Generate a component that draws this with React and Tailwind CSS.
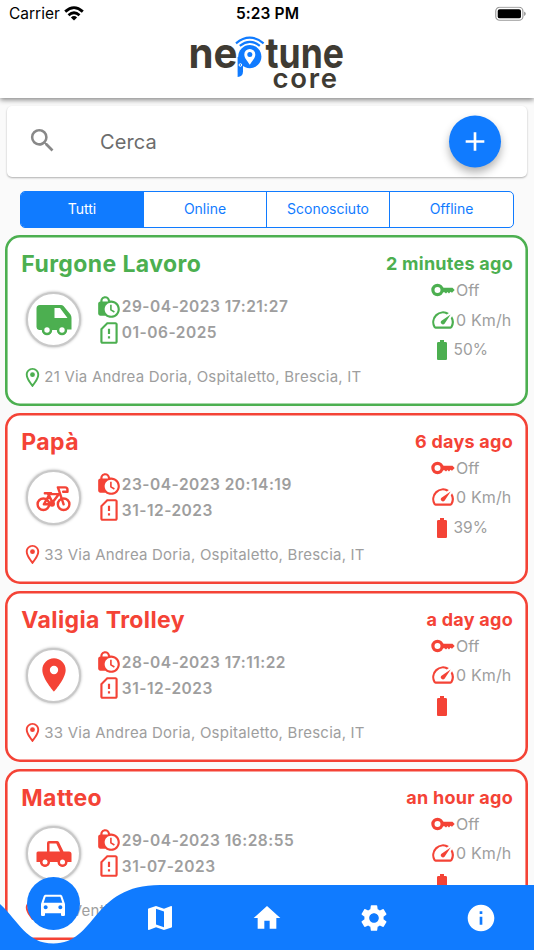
import {
  MdAdd,
  MdBatteryFull,
  MdDirectionsCar,
  MdHome,
  MdInfo,
  MdLocationOn,
  MdLockClock,
  MdMap,
  MdOutlineLocationOn,
  MdOutlineSimCardAlert,
  MdSearch,
  MdSettings,
  MdSpeed,
} from "react-icons/md";

const tabs = ["Tutti", "Online", "Sconosciuto", "Offline"];

const devices = [
  {
    name: "Furgone Lavoro",
    ago: "2 minutes ago",
    icon: VanIcon,
    online: true,
    lastSeen: "29-04-2023 17:21:27",
    expires: "01-06-2025",
    address: "21 Via Andrea Doria, Ospitaletto, Brescia, IT",
    battery: "50%",
  },
  {
    name: "Papà",
    ago: "6 days ago",
    icon: BikeIcon,
    online: false,
    lastSeen: "23-04-2023 20:14:19",
    expires: "31-12-2023",
    address: "33 Via Andrea Doria, Ospitaletto, Brescia, IT",
    battery: "39%",
  },
  {
    name: "Valigia Trolley",
    ago: "a day ago",
    icon: PinIcon,
    online: false,
    lastSeen: "28-04-2023 17:11:22",
    expires: "31-12-2023",
    address: "33 Via Andrea Doria, Ospitaletto, Brescia, IT",
    battery: "",
  },
  {
    name: "Matteo",
    ago: "an hour ago",
    icon: PickupIcon,
    online: false,
    lastSeen: "29-04-2023 16:28:55",
    expires: "31-07-2023",
    address: "Via Venti",
    battery: "",
  },
];

function VanIcon() {
  return (
    <svg width="36" height="32" viewBox="0 0 36 32" fill="currentColor">
      <path
        fillRule="evenodd"
        d="M4 1H25Q26.500 1 27.500 2L34.500 10.500Q35.500 12 35.500 14V25.500H31A5 5 0 0 1 21 26H16A5 5 0 0 1 6 26H3Q.5 25.500.5 23V4.500Q.5 1 4 1ZM18.500 4V14H31.500L24 4Z"
      />
      <circle cx="11" cy="26" r="5.200" />
      <circle cx="26" cy="26" r="5.200" />
      <circle cx="11" cy="26" r="2.700" fill="white" />
      <circle cx="26" cy="26" r="2.700" fill="white" />
    </svg>
  );
}

function BikeIcon() {
  return (
    <svg width="35" height="27" viewBox="0 0 36 28" fill="none" stroke="currentColor" strokeWidth="2.500" strokeLinecap="round" strokeLinejoin="round" className="translate-y-px">
      <circle cx="7.500" cy="20" r="6" />
      <circle cx="28.500" cy="20" r="6" />
      <path d="M8 20H15.500L23.500 9.500H14L8 20M12.500 9.500L17 18M9 8.500H15.500M28.500 20L24 6.500L22.500 2.500H30Q32.500 2.500 32.500 5V7H28" />
      <circle cx="16.500" cy="19.500" r="1.800" fill="currentColor" />
    </svg>
  );
}

function PinIcon() {
  return <MdLocationOn size={40} />;
}

function PickupIcon() {
  return (
    <svg width="36" height="28" viewBox="0 0 36 28" fill="currentColor" className="translate-y-px">
      <path
        fillRule="evenodd"
        d="M13 1H21Q22.300 1 23 2.200L27.500 11.500H33Q35.500 11.500 35.500 14V22H31.500A5 5 0 0 1 21.500 22H14A5 5 0 0 1 4 22H.5V13Q.5 11.500 2 11.500H11V3Q11 1 13 1ZM13.500 3.500V11.500H24L20.300 3.500Z"
      />
      <circle cx="9" cy="22" r="4.600" />
      <circle cx="26.500" cy="22" r="4.600" />
      <circle cx="9" cy="22" r="2.500" fill="white" />
      <circle cx="26.500" cy="22" r="2.500" fill="white" />
    </svg>
  );
}

function KeyIcon() {
  return (
    <svg width="24" height="14" viewBox="0 0 24 14">
      <circle cx="6.500" cy="7" r="4.600" fill="none" stroke="currentColor" strokeWidth="3.200" />
      <path d="M11.300 4.700H21.500L23.700 7L21 9.800L19.500 8.700L18 10.500L16.500 8.900L15 10.500L13.500 9.200H11.300Z" fill="currentColor" />
    </svg>
  );
}

function Logo() {
  return (
    <svg width="160" height="60" viewBox="0 0 160 60" className="overflow-visible font-[Inter]">
      <g fill="#3f3b33" fontWeight="700">
        <text x="1.500" y="35" fontSize="42" textLength="49" lengthAdjust="spacingAndGlyphs">ne</text>
        <text x="78.500" y="35" fontSize="42" textLength="78.500" lengthAdjust="spacingAndGlyphs">tune</text>
        <text x="85.500" y="55" fontSize="27.500" fontWeight="600" letterSpacing="1.700">core</text>
      </g>
      {/* Tracker pin that stands for the letter p */}
      <circle cx="62.800" cy="23.600" r="12.200" fill="white" />
      <circle cx="62.800" cy="23.600" r="11.600" fill="#107bff" />
      <path d="M50.600 24H56V38.500Q56 43.500 50.600 44Z" fill="#107bff" />
      <g fill="none" stroke="#107bff" strokeWidth="2.200">
        <path d="M49 10.300Q62.800-1 76.600 10.300" />
        <path d="M52.800 12.800Q62.800 4.800 72.800 12.800" />
      </g>
      <path d="M62.800 31.800C60 27.500 57.300 25 57.300 21.500A5.500 5.500 0 0 1 68.300 21.500C68.300 25 65.600 27.500 62.800 31.800Z" fill="white" />
      <circle cx="62.800" cy="21.500" r="2.500" fill="#107bff" />
      <circle cx="53.400" cy="32" r="1.300" fill="none" stroke="white" strokeWidth="1" />
    </svg>
  );
}

function StatusBar() {
  return (
    <div className="grid h-7 grid-cols-3 items-center pr-2 pl-[9px] text-black">
      <div className="flex items-center gap-[5px]">
        <span className="text-[15.500px] leading-none">Carrier</span>
        <svg width="20" height="15" viewBox="0 0 20 15" fill="none" stroke="currentColor" strokeWidth="2.800" className="-translate-x-px -translate-y-px">
          <path d="M1.200 5.600Q10-2.400 18.800 5.600" />
          <path d="M4.500 9.200Q10 4.300 15.500 9.200" />
          <path d="M10 14.500L6.900 11.400Q10 8.800 13.100 11.400Z" fill="currentColor" stroke="none" />
        </svg>
      </div>
      <span className="text-center text-[15.500px] leading-none font-semibold tracking-[0.100px]">5:23 PM</span>
      <svg width="31" height="15" viewBox="0 0 32 16" preserveAspectRatio="none" className="-translate-y-[0.500px] justify-self-end">
        <rect x=".8" y=".8" width="28" height="13.800" rx="4" fill="none" stroke="#999" strokeWidth="1.200" />
        <rect x="2.800" y="2.800" width="24" height="9.800" rx="2" fill="black" />
        <path d="M30 5.200Q31.800 6 31.800 7.600Q31.800 9.200 30 10Z" fill="#999" />
      </svg>
    </div>
  );
}

function DeviceCard({ device }) {
  const Icon = device.icon;
  const frame = device.online
    ? "text-[#4caf50] shadow-[inset_0_0_0_2.600px_#4caf50]"
    : "text-[#f44336] shadow-[inset_0_0_0_2.600px_#f44336]";
  const tint = device.online ? "[&_svg]:text-[#4caf50]" : "[&_svg]:text-[#f44336]";

  return (
    <article className={`flex h-[171.300px] shrink-0 justify-between rounded-[15px] bg-white pt-[14px] pr-[15px] pl-[16px] ${frame}`}>
      <div className="flex flex-col">
        <h2 className="h-[31px] text-[23px] leading-[31px] font-bold tracking-[0.400px] whitespace-nowrap">{device.name}</h2>
        <div className="mt-[12px] flex items-center">
          <div className="ml-[5px] flex size-[55px] items-center justify-center rounded-full border-2 border-[#c9c9c9] bg-white shadow-[0_0_3px_#aaa]">
            <Icon />
          </div>
          <div className="ml-[14.500px] flex flex-col text-[15.500px] font-semibold tracking-[0.500px]">
            <div className="flex h-[26px] items-center">
              <MdLockClock size={26} />
              <span className="whitespace-nowrap text-[#9e9e9e]">{device.lastSeen}</span>
            </div>
            <div className="flex h-[26px] items-center">
              <MdOutlineSimCardAlert size={26} />
              <span className="whitespace-nowrap text-[#9e9e9e]">{device.expires}</span>
            </div>
          </div>
        </div>
        <div className="mt-[18px] flex h-[24px] items-center">
          <MdOutlineLocationOn size={23} />
          <span className="text-[15px] tracking-[0.220px] whitespace-nowrap text-[#9e9e9e]">{device.address}</span>
        </div>
      </div>

      <div className="flex flex-col items-end">
        <span className="h-[28px] text-[18px] leading-[29px] font-bold tracking-[0.260px] whitespace-nowrap">{device.ago}</span>
        <div className={`w-[82px] text-[16px] text-[#9e9e9e] ${tint}`}>
          <div className="flex h-[26px] items-center">
            <KeyIcon />
            <span className="ml-px">Off</span>
          </div>
          <div className="flex h-[33px] items-center">
            <MdSpeed size={26} className="-ml-px" />
            <span className="tracking-[0.150px] whitespace-nowrap">0 Km/h</span>
          </div>
          <div className="flex h-[28px] items-center">
            <MdBatteryFull size={24} className="-ml-[1.500px]" />
            <span className="text-[15.500px]">{device.battery}</span>
          </div>
        </div>
      </div>
    </article>
  );
}

function BottomNav() {
  return (
    <nav className="absolute inset-x-0 bottom-0 h-[65px] text-white">
      {/* Bar with the dip under the selected item */}
      <svg width="534" height="65" viewBox="0 0 534 65" className="absolute inset-0">
        <path d="M-53 0C16 0 10 58.500 53.500 58.500C97 58.500 91 0 160 0H534V65H-53Z" fill="#107bff" />
      </svg>
      <div className="relative grid h-full grid-cols-5 place-items-center">
        <div className="flex size-[53px] -translate-y-[14px] items-center justify-center rounded-full bg-[#107bff]">
          <MdDirectionsCar size={32} />
        </div>
        <MdMap size={32} />
        <MdHome size={32} />
        <MdSettings size={32} />
        <MdInfo size={32} />
      </div>
    </nav>
  );
}

export default function App() {
  return (
    <main className="relative flex h-[950px] w-[534px] flex-col overflow-hidden bg-[#fafafa] font-[Inter,sans-serif]">
      <header className="relative h-[98px] shrink-0 bg-white shadow-[0_2px_5px_rgba(0,0,0,0.450)]">
        <StatusBar />
        <div className="flex justify-center pt-[5px]">
          <Logo />
        </div>
      </header>

      <section className="mx-[7px] mt-2 flex h-[71px] shrink-0 items-center rounded-[5px] bg-white pr-[26px] pl-5 shadow-[0_1px_2px_rgba(0,0,0,0.300)]">
        <MdSearch size={31} className="-translate-y-px text-[#888]" />
        <span className="ml-[42px] flex-1 -translate-y-[0.500px] text-[20px] tracking-[0.100px] text-[#6c6c6c]">Cerca</span>
        <button className="flex size-[52px] -translate-y-[0.500px] items-center justify-center rounded-full bg-[#107bff] text-white shadow-[0_5px_8px_rgba(0,0,0,0.300)]">
          <MdAdd size={32} />
        </button>
      </section>

      <div className="mt-[14px] mr-[20px] ml-[20px] grid h-[37px] shrink-0 grid-cols-4 divide-x divide-[#107bff] overflow-hidden rounded-[5px] border border-[#107bff] bg-white">
        {tabs.map((tab, i) => (
          <button key={tab} className={`pb-[2px] text-[14px] ${i === 0 ? "bg-[#107bff] text-white" : "text-[#107bff]"}`}>
            {tab}
          </button>
        ))}
      </div>

      <section className="mr-[6px] ml-[5.300px] mt-[7px] flex flex-col gap-[6.700px]">
        {devices.map((device) => (
          <DeviceCard key={device.name} device={device} />
        ))}
      </section>

      <BottomNav />
    </main>
  );
}
